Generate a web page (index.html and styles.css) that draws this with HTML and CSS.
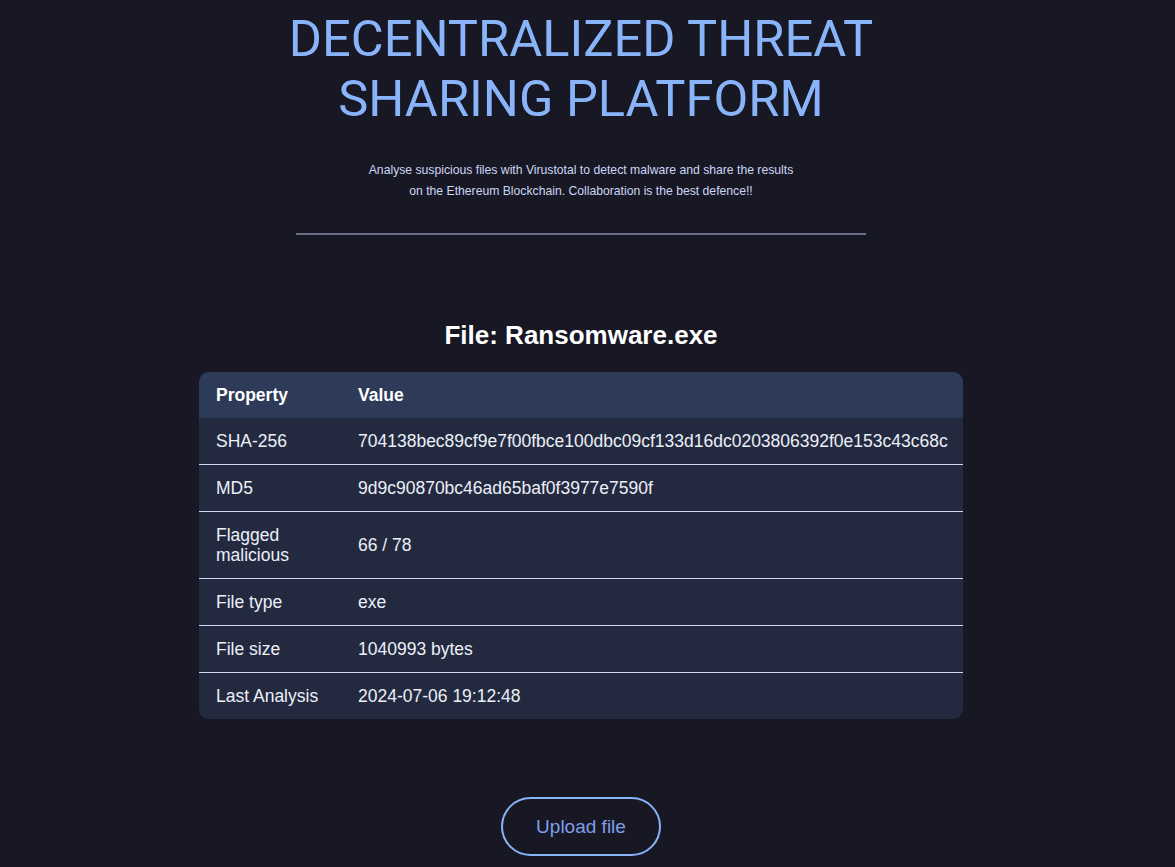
FILE: index.html
```html
<!DOCTYPE html>
<html lang="en">
<head>
<meta charset="utf-8">
<title>Decentralized Threat Sharing Platform</title>
<link rel="stylesheet" href="styles.css">
</head>
<body>
<main class="page">
  <header class="hero">
    <h1 class="title">DECENTRALIZED THREAT SHARING PLATFORM</h1>
    <p class="subtitle">Analyse suspicious files with Virustotal to detect malware and share the results on the Ethereum Blockchain. Collaboration is the best defence!!</p>
    <hr class="divider">
  </header>
  <section class="report">
    <h2 class="file-name">File: Ransomware.exe</h2>
    <table class="info-table">
      <thead>
        <tr><th class="col-prop">Property</th><th>Value</th></tr>
      </thead>
      <tbody>
        <tr><td>SHA-256</td><td>704138bec89cf9e7f00fbce100dbc09cf133d16dc0203806392f0e153c43c68c</td></tr>
        <tr><td>MD5</td><td>9d9c90870bc46ad65baf0f3977e7590f</td></tr>
        <tr><td>Flagged malicious</td><td>66 / 78</td></tr>
        <tr><td>File type</td><td>exe</td></tr>
        <tr><td>File size</td><td>1040993 bytes</td></tr>
        <tr><td>Last Analysis</td><td>2024-07-06 19:12:48</td></tr>
      </tbody>
    </table>
    <button class="upload-btn" type="button">Upload file</button>
  </section>
</main>
</body>
</html>
```
FILE: styles.css
```css
html, body {
  margin: 0;
  padding: 0;
  background: #181825;
}
body {
  font-family: "Liberation Sans", Arial, sans-serif;
  color: #cdd6f4;
}
.page {
  display: flex;
  flex-direction: column;
  align-items: center;
  padding-right: 13px;
}
.hero {
  display: flex;
  flex-direction: column;
  align-items: center;
  width: 620px;
}
.title {
  font-family: Roboto, sans-serif;
  font-weight: 400;
  font-size: 50.6px;
  line-height: 60px;
  color: #89b4fa;
  text-align: center;
  margin: 9px 0 0 0;
  width: 620px;
}
.subtitle {
  font-size: 12.2px;
  line-height: 21px;
  text-align: center;
  width: 436px;
  margin: 31px 0 0 0;
  color: #cdd6f4;
}
.divider {
  width: 570px;
  border: 0;
  border-top: 2px solid #6c7086;
  margin: 31px 0 0 0;
}
.report {
  display: flex;
  flex-direction: column;
  align-items: center;
}
.file-name {
  font-size: 26px;
  font-weight: 700;
  color: #ffffff;
  margin: 85px 0 22px 0;
  line-height: 30px;
}
.info-table {
  width: 764px;
  table-layout: fixed;
  border-collapse: separate;
  border-spacing: 0;
  border-radius: 10px;
  overflow: hidden;
  background: #232a40;
  font-size: 17.5px;
  color: #eceff8;
}
.info-table th,
.info-table td {
  text-align: left;
  padding: 13px 16px 13px 17px;
  line-height: 20px;
  vertical-align: middle;
}
.info-table th {
  background: #2d3b58;
  font-weight: 700;
  color: #ffffff;
}
.info-table .col-prop {
  width: 109px;
}
.info-table tbody tr + tr td {
  border-top: 1px solid #cdd6f4;
}
.upload-btn {
  margin: 78px 0 10px 0;
  width: 160px;
  height: 59px;
  border: 2px solid #89b4fa;
  border-radius: 30px;
  background: transparent;
  color: #7f9fe8;
  font-family: "Liberation Sans", Arial, sans-serif;
  font-size: 19px;
}
```
